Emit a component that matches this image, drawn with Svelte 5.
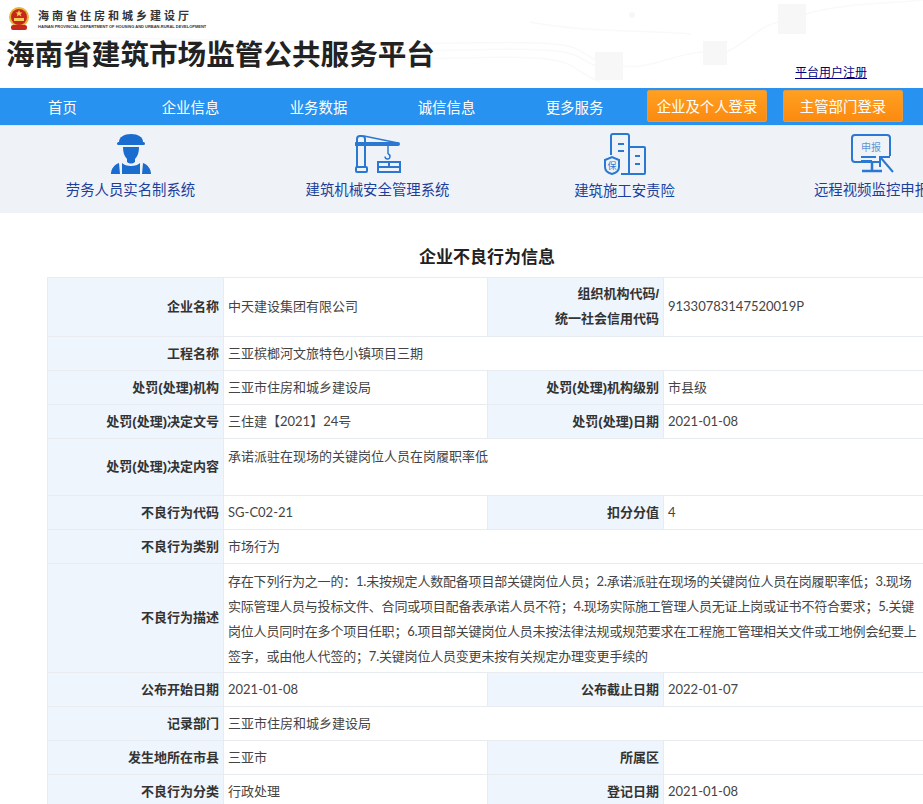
<script>
  const nav = ["首页", "企业信息", "业务数据", "诚信信息", "更多服务"];

  const rows = [
    { cells: [["企业名称", "中天建设集团有限公司"], [["组织机构代码/", "统一社会信用代码"], "91330783147520019P"]], cls: "tall" },
    { cells: [["工程名称", "三亚槟榔河文旅特色小镇项目三期"]] },
    { cells: [["处罚(处理)机构", "三亚市住房和城乡建设局"], ["处罚(处理)机构级别", "市县级"]] },
    { cells: [["处罚(处理)决定文号", "三住建【2021】24号"], ["处罚(处理)日期", "2021-01-08"]] },
    { cells: [["处罚(处理)决定内容", "承诺派驻在现场的关键岗位人员在岗履职率低"]], cls: "content" },
    { cells: [["不良行为代码", "SG-C02-21"], ["扣分分值", "4"]] },
    { cells: [["不良行为类别", "市场行为"]] },
    { cells: [["不良行为描述", "存在下列行为之一的：1.未按规定人数配备项目部关键岗位人员；2.承诺派驻在现场的关键岗位人员在岗履职率低；3.现场实际管理人员与投标文件、合同或项目配备表承诺人员不符；4.现场实际施工管理人员无证上岗或证书不符合要求；5.关键岗位人员同时在多个项目任职；6.项目部关键岗位人员未按法律法规或规范要求在工程施工管理相关文件或工地例会纪要上签字，或由他人代签的；7.关键岗位人员变更未按有关规定办理变更手续的"]], cls: "desc" },
    { cells: [["公布开始日期", "2021-01-08"], ["公布截止日期", "2022-01-07"]] },
    { cells: [["记录部门", "三亚市住房和城乡建设局"]] },
    { cells: [["发生地所在市县", "三亚市"], ["所属区", ""]] },
    { cells: [["不良行为分类", "行政处理"], ["登记日期", "2021-01-08"]] }
  ];
</script>

<div class="page">
  <header class="top">
    <svg class="bg" width="923" height="88" viewBox="0 0 923 88" fill="none" aria-hidden="true">
      <g stroke="#f9f9fa" stroke-width="1.5">
        <path d="M0 40 C150 34 330 46 460 43 S570 48 596 60" />
        <path d="M0 50 C150 44 330 54 460 50 S570 56 596 66" />
        <path d="M0 60 C150 56 330 62 460 58 S560 66 600 82" />
        <path d="M622 66 C650 70 680 52 703 52" />
        <path d="M727 52 C750 40 760 26 778 22" />
        <path d="M806 14 C840 4 880 4 923 0" />
        <path d="M530 22 C580 32 640 30 690 34" />
      </g>
      <g fill="#f7f7f8">
        <rect x="595" y="52" width="28" height="28" />
        <rect x="703" y="41" width="24" height="24" />
        <rect x="778" y="4" width="28" height="30" />
        <circle cx="632" cy="15" r="3" />
      </g>
    </svg>
    <div class="brand">
      <svg class="emblem" width="22" height="24" viewBox="0 0 22 24" aria-hidden="true">
        <circle cx="11" cy="10" r="10" fill="#e6b53a" />
        <circle cx="11" cy="10" r="8" fill="#c8261d" />
        <path d="M11 3l1 2.400 2.500.1-2 1.500.8 2.400L11 8l-2.300 1.400.8-2.400-2-1.500 2.500-.1z" fill="#f4cf56" />
        <rect x="6" y="11" width="10" height="3" fill="#f4cf56" />
        <rect x="3" y="18" width="16" height="5" rx="2" fill="#c8261d" />
      </svg>
      <div class="dept">
        <div class="dept-cn">海南省住房和城乡建设厅</div>
        <div class="dept-en">HAINAN PROVINCIAL DEPARTMENT OF HOUSING AND URBAN-RURAL DEVELOPMENT</div>
      </div>
    </div>
    <div class="title-row">
      <h1>海南省建筑市场监管公共服务平台</h1>
      <a class="register" href="#top">平台用户注册</a>
    </div>
  </header>

  <nav class="nav">
    <div class="nav-items">
      {#each nav as item}
        <span class="nav-item">{item}</span>
      {/each}
    </div>
    <span class="btn first">企业及个人登录</span>
    <span class="btn">主管部门登录</span>
  </nav>

  <section class="systems">
    <a class="system" href="#top">
      <span class="icon">
        <svg width="40" height="42" viewBox="0 0 40 42" aria-hidden="true" fill="#1a6ccf">
          <path d="M8 9c0-5 5-8 12-8s12 3 12 8v2H8z" />
          <rect x="6" y="9" width="28" height="3" rx="1.500" />
          <path d="M12 14h16c0 5-1 9-4 12v3c-3 2-5 2-8 0v-3c-3-3-4-7-4-12z" />
          <path d="M0 41c0-5 3-9 8-11l1 11zM11 41V30c2 2 5 3 9 3s7-1 9-3v11zM40 41c0-5-3-9-8-11l-1 11z" />
        </svg>
      </span>
      <span>劳务人员实名制系统</span>
    </a>
    <a class="system" href="#top">
      <span class="icon">
        <svg width="46" height="40" viewBox="0 0 46 40" aria-hidden="true" fill="none" stroke="#2a78d2" stroke-width="2">
          <path d="M2 34V5a3 3 0 0 1 3-3h2a3 3 0 0 1 3 3v29" />
          <path d="M1 10h42" stroke-width="4" stroke-linecap="round" />
          <path d="M9 2l34 7" stroke-width="1.500" />
          <rect x="1" y="33" width="11" height="5" rx="1" />
          <path d="M33 11v9" stroke-width="1.500" />
          <path d="M33 20a2.500 2.500 0 1 1-3 2.500" stroke-width="1.500" />
          <rect x="23" y="28" width="22" height="10" />
          <path d="M23 33h22M34 28v5" />
        </svg>
      </span>
      <span>建筑机械安全管理系统</span>
    </a>
    <a class="system third" href="#top">
      <span class="icon">
        <svg width="42" height="42" viewBox="0 0 42 42" aria-hidden="true" fill="none" stroke="#2a78d2" stroke-width="2">
          <path d="M7 22V3a2 2 0 0 1 2-2h14a2 2 0 0 1 2 2v38h-8" />
          <path d="M25 14h15a1 1 0 0 1 1 1v25a1 1 0 0 1-1 1H25" />
          <path d="M14 11h6M14 18h6M31 23h5M31 31h5" />
          <path d="M1 27l7-3 7 3v7c0 4-3 6-7 7-4-1-7-3-7-7z" fill="#eff3f7" />
          <text x="3.500" y="36" font-size="9" fill="#2a78d2" stroke="none" font-family="Noto Sans CJK SC">保</text>
        </svg>
      </span>
      <span>建筑施工安责险</span>
    </a>
    <a class="system" href="#top">
      <span class="icon">
        <svg width="44" height="40" viewBox="0 0 44 40" aria-hidden="true" fill="none" stroke="#2a78d2" stroke-width="2">
          <path d="M30 28H5a3 3 0 0 1-3-3V4a3 3 0 0 1 3-3h32a3 3 0 0 1 3 3v18" />
          <text x="11" y="17" font-size="10" fill="#5f93d6" stroke="none" font-family="Noto Sans CJK SC">申报</text>
          <path d="M11 23h15M11 27h11" />
          <path d="M22 29v7M12 37h20" stroke-width="2.500" />
          <path d="M30 33V23h10M31 24l12 14" />
        </svg>
      </span>
      <span>远程视频监控申报</span>
    </a>
  </section>

  <h2>企业不良行为信息</h2>

  <table>
    <colgroup>
      <col class="c1" /><col class="c2" /><col class="c3" /><col class="c4" />
    </colgroup>
    <tbody>
      {#each rows as row}
        <tr class={row.cls}>
          {#each row.cells as cell}
            <th>
              {#if Array.isArray(cell[0])}
                {cell[0][0]}<br />{cell[0][1]}
              {:else}
                {cell[0]}
              {/if}
            </th>
            <td colspan={row.cells.length === 1 ? 3 : 1}>{cell[1]}</td>
          {/each}
        </tr>
      {/each}
    </tbody>
  </table>
</div>

<style>
  :global(body) {
    margin: 0;
    background: #fff;
    overflow: hidden;
  }
  .page {
    width: 923px;
    height: 804px;
    overflow: hidden;
    font-family: "Liberation Sans", "Noto Sans CJK SC", sans-serif;
    font-size: 13px;
    color: #333;
  }
  .top {
    position: relative;
    height: 88px;
    padding: 7px 0 0 8px;
    box-sizing: border-box;
    background: #fff;
  }
  .bg {
    position: absolute;
    left: 0;
    top: 0;
  }
  .brand {
    position: relative;
    display: flex;
    align-items: center;
    gap: 8px;
    height: 24px;
  }
  .dept-cn {
    font-size: 11px;
    font-weight: 700;
    letter-spacing: 3px;
    line-height: 15px;
    color: #333;
    white-space: nowrap;
  }
  .dept-en {
    font-size: 4px;
    font-weight: 700;
    line-height: 6px;
    color: #333;
    white-space: nowrap;
  }
  .title-row {
    position: relative;
    display: flex;
    align-items: flex-end;
    margin: 6px 0 0 -2px;
  }
  h1 {
    flex: none;
    width: 789px;
    margin: 0;
    font-size: 28.6px;
    line-height: 36px;
    font-weight: 700;
    color: #222;
    white-space: nowrap;
  }
  .register {
    margin-bottom: -8px;
    font-size: 12px;
    line-height: 16px;
    color: #000080;
  }
  .nav {
    display: flex;
    align-items: flex-start;
    height: 37px;
    background: #2792ef;
    color: #fff;
    font-size: 14.4px;
    border-bottom: 1px solid #cfefff;
  }
  .nav-items {
    display: flex;
    flex: none;
    width: 647px;
    margin-left: -1.500px;
    padding-top: 11px;
    line-height: 19px;
  }
  .nav-item {
    flex: none;
    width: 128px;
    text-align: center;
  }
  .btn {
    flex: none;
    width: 118px;
    height: 29px;
    margin-top: 2px;
    padding-top: 1px;
    line-height: 30px;
    text-align: center;
    border: 1px solid #e89b3c;
    border-radius: 2px;
    background: linear-gradient(#ffa01f, #fb8a10);
    color: #fff;
    white-space: nowrap;
  }
  .btn.first {
    margin-left: 1.500px;
    margin-right: 16px;
  }
  .systems {
    display: flex;
    height: 87px;
    padding-left: 7px;
    background: #eff3f7;
  }
  .system {
    flex: none;
    width: 247px;
    display: flex;
    flex-direction: column;
    align-items: center;
    color: #1c3f9e;
    font-size: 14.4px;
    line-height: 18px;
    text-decoration: none;
    white-space: nowrap;
  }
  .icon {
    display: flex;
    align-items: center;
    height: 55px;
  }
  .third span:last-child {
    margin-top: 1px;
  }
  h2 {
    margin: 34px 0 0;
    padding-left: 51px;
    text-align: center;
    font-size: 17px;
    line-height: 22px;
    font-weight: 700;
    color: #222;
  }
  table {
    margin: 8px 0 0 47px;
    width: 880px;
    border-collapse: collapse;
    table-layout: fixed;
    font-size: 13px;
  }
  .c1 { width: 176px; }
  .c2 { width: 264px; }
  .c3 { width: 176px; }
  th, td {
    border: 1px solid #e8ecf1;
    height: 34px;
    padding: 0 4px 1px;
    box-sizing: border-box;
  }
  th {
    background: #eff5fc;
    text-align: right;
    font-weight: 700;
    color: #333;
    line-height: 25px;
  }
  td {
    font-family: Lato, "Noto Sans CJK SC", sans-serif;
    color: #444;
    line-height: 26px;
  }
  tr.tall th, tr.tall td { height: 59px; padding-bottom: 2px; }
  tr.content th, tr.content td { height: 57px; padding-bottom: 2px; }
  tr.content td { vertical-align: top; padding-top: 4px; }
  tr.desc th, tr.desc td { height: 109px; }
  tr.desc td { line-height: 25px; padding-top: 2px; padding-bottom: 0; letter-spacing: -0.2px; }
</style>
